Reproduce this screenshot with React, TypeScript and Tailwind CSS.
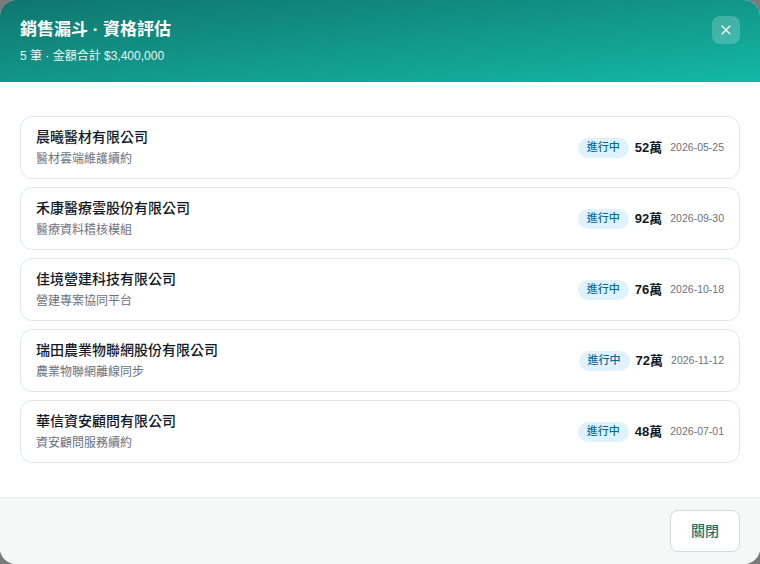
import { X } from "lucide-react";

type Deal = {
    name: string;
    note: string;
    amount: string;
    date: string;
};

const deals: Deal[] = [
    { name: "晨曦醫材有限公司", note: "醫材雲端維護續約", amount: "52萬", date: "2026-05-25" },
    { name: "禾康醫療雲股份有限公司", note: "醫療資料稽核模組", amount: "92萬", date: "2026-09-30" },
    { name: "佳境營建科技有限公司", note: "營建專案協同平台", amount: "76萬", date: "2026-10-18" },
    { name: "瑞田農業物聯網股份有限公司", note: "農業物聯網離線同步", amount: "72萬", date: "2026-11-12" },
    { name: "華信資安顧問有限公司", note: "資安顧問服務續約", amount: "48萬", date: "2026-07-01" },
];

export default function App() {
    return (
        <div
            className="w-[760px] h-[564px] bg-[#7a7a7a]"
            style={{ fontFamily: "'Liberation Sans', 'Noto Sans CJK TC', sans-serif" }}
        >
            <div className="flex flex-col h-full rounded-2xl overflow-hidden bg-white">
                {/* header */}
                <div className="flex justify-between h-[82px] px-5 pt-4 bg-gradient-to-br from-[#0f766e] to-[#14b8a6]">
                    <div className="flex flex-col">
                        <h1 className="text-[17px] font-bold text-white leading-6 mt-[2px]">銷售漏斗 · 資格評估</h1>
                        <p className="text-xs text-white/90 mt-[6px]">5 筆 · 金額合計 $3,400,000</p>
                    </div>
                    <button className="flex items-center justify-center w-7 h-7 rounded-lg bg-white/20 text-white">
                        <X className="w-4 h-4" strokeWidth={1.75} />
                    </button>
                </div>

                {/* list */}
                <div className="flex-1 flex flex-col gap-2 px-5 py-[34px]">
                    {deals.map((d) => (
                        <div
                            key={d.name}
                            className="flex items-center justify-between h-[63px] px-[15px] rounded-xl border border-[#dfe9e7]"
                        >
                            <div className="flex flex-col -mt-[1px]">
                                <span className="text-sm font-medium text-[#111827] leading-5">{d.name}</span>
                                <span className="text-xs text-[#6b7280] leading-4 mt-[4px]">{d.note}</span>
                            </div>
                            <div className="flex items-center">
                                <span className="px-[9px] h-5 flex items-center rounded-full bg-[#e0f2fe] text-[#0369a1] text-[11px] font-medium">
                                    進行中
                                </span>
                                <span className="ml-[6px] text-[13px] font-bold text-[#111827]">{d.amount}</span>
                                <span className="ml-2 text-[10.5px] text-[#6b7280]">{d.date}</span>
                            </div>
                        </div>
                    ))}
                </div>

                {/* footer */}
                <div className="flex justify-end h-[67px] px-5 pt-3 border-t border-[#e3ebe9] bg-[#f5f8f7]">
                    <button className="w-[70px] h-[42px] rounded-lg border border-[#cfdcd9] bg-white text-sm font-medium text-[#0f766e]">
                        關閉
                    </button>
                </div>
            </div>
        </div>
    );
}
